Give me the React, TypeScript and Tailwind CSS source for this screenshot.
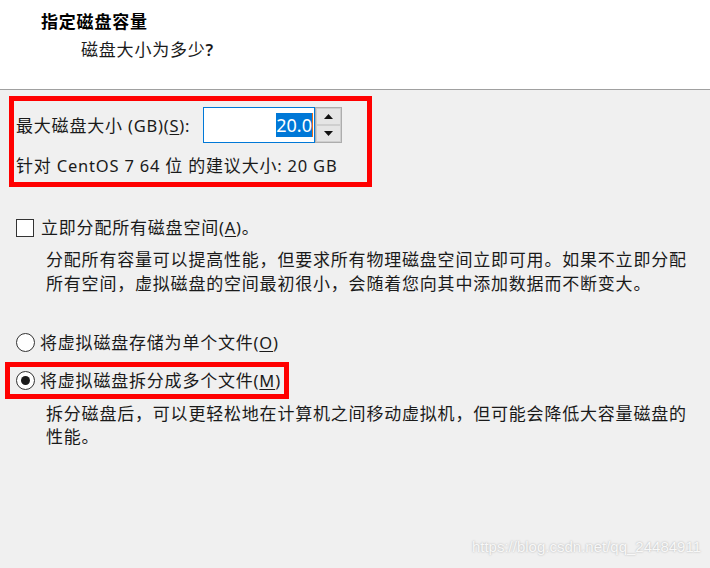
// New virtual machine wizard: "指定磁盘容量" page, with the two red call-out boxes.
import type { ReactNode } from "react";

const CJK = "font-['Noto_Sans_CJK_SC',sans-serif] text-[17px] tracking-[0.8px]";
const LAT = "font-['Noto_Sans','Noto_Sans_CJK_SC',sans-serif] text-[16.5px] tracking-[0.8px]";

function Z({ children, className = "" }: { children: ReactNode; className?: string }) {
  return <span className={`${CJK} ${className}`}>{children}</span>;
}

function L({ children, className = "" }: { children: ReactNode; className?: string }) {
  return <span className={`${LAT} ${className}`}>{children}</span>;
}

/** "(X)" access key with the letter underlined. */
function Key({ k }: { k: string }) {
  return (
    <L>
      (<span className="underline underline-offset-2">{k}</span>)
    </L>
  );
}

function Radio({ checked }: { checked?: boolean }) {
  return (
    <span className="flex h-[19px] w-[19px] shrink-0 items-center justify-center rounded-full border border-[#333] bg-white">
      {checked && <span className="h-[9px] w-[9px] rounded-full bg-[#1a1a1a]" />}
    </span>
  );
}

function Arrow({ up }: { up?: boolean }) {
  return (
    <svg viewBox="0 0 9 5" width="9" height="5" aria-hidden>
      <path d={up ? "M0 5L4.5 0L9 5Z" : "M0 0L4.5 5L9 0Z"} fill="#111" />
    </svg>
  );
}

function SizeInput() {
  return (
    <div className="flex">
      <div className="flex h-[36px] w-[112px] items-center justify-end border border-[#0078d7] bg-white pr-[1px]">
        <span className="bg-[#0078d7] font-['Noto_Sans',sans-serif] text-[18px] leading-[24px] text-white">
          20.0
        </span>
        <span className="h-[24px] w-[1px] bg-[#e06a1a]" />
      </div>
      <div className="flex h-[36px] w-[27px] flex-col border border-[#adadad] bg-[#f0f0f0]">
        <div className="flex flex-1 items-center justify-center border border-[#cfcfcf] bg-[#e5e5e5]">
          <Arrow up />
        </div>
        <div className="flex flex-1 items-center justify-center border border-[#cfcfcf] bg-[#e5e5e5]">
          <Arrow />
        </div>
      </div>
    </div>
  );
}

export default function App() {
  return (
    <div className="relative h-[568px] w-[710px] overflow-hidden bg-[#f0f0f0] text-[#1a1a1a]">
      <header className="h-[90px] border-b border-[#a0a0a0] bg-white pt-[9px]">
        <div className="pl-[41px] leading-[24px]">
          <Z className="font-bold text-black">指定磁盘容量</Z>
        </div>
        <div className="mt-[3px] pl-[81px] leading-[24px]">
          <Z>磁盘大小为多少</Z>
          <L className="font-semibold">?</L>
        </div>
      </header>

      <section className="ml-[9px] mt-[6px] h-[91px] w-[363px] border-[5px] border-[#ff0000] pl-[2px] pt-[6px]">
        <div className="flex h-[36px] items-center">
          <div className="w-[187px] shrink-0 whitespace-nowrap leading-[24px]">
            <Z>最大磁盘大小</Z>
            <L> (GB)</L>
            <Key k="S" />
            <L>:</L>
          </div>
          <SizeInput />
        </div>
        <div className="mt-[10px] whitespace-nowrap leading-[24px]">
          <Z>针对</Z>
          <L> CentOS 7 64 </L>
          <Z>位</Z>
          <L> </L>
          <Z>的建议大小</Z>
          <L>: 20 GB</L>
        </div>
      </section>

      <div className="mt-[28px] flex items-center gap-[7px] pl-[16px] leading-[24px]">
        <span className="h-[18px] w-[18px] shrink-0 border border-[#333] bg-white" />
        <div>
          <Z>立即分配所有磁盘空间</Z>
          <Key k="A" />
          <Z>。</Z>
        </div>
      </div>
      <p className={`${CJK} mt-[7px] pl-[46px] pr-[10px] leading-[24px]`}>
        分配所有容量可以提高性能，但要求所有物理磁盘空间立即可用。如果不立即分配所有空间，虚拟磁盘的空间最初很小，会随着您向其中添加数据而不断变大。
      </p>

      <div className="mt-[35px] flex items-center gap-[5px] pl-[16px] leading-[24px]">
        <Radio />
        <div>
          <Z>将虚拟磁盘存储为单个文件</Z>
          <Key k="O" />
        </div>
      </div>

      <div className="ml-[5px] mt-[7px] flex h-[37px] w-[284px] items-center gap-[5px] border-[5px] border-[#ff0000] pl-[6px] leading-[24px]">
        <Radio checked />
        <div className="whitespace-nowrap">
          <Z>将虚拟磁盘拆分成多个文件</Z>
          <Key k="M" />
        </div>
      </div>
      <p className={`${CJK} mt-[2px] pl-[46px] pr-[10px] leading-[23px]`}>
        拆分磁盘后，可以更轻松地在计算机之间移动虚拟机，但可能会降低大容量磁盘的性能。
      </p>

      <span className="absolute bottom-[10px] right-[9px] font-['Liberation_Sans',sans-serif] text-[15px] text-[#f8f8f8] [text-shadow:0_0_2px_#a8a8a8]">
        https://blog.csdn.net/qq_24484911
      </span>
    </div>
  );
}
